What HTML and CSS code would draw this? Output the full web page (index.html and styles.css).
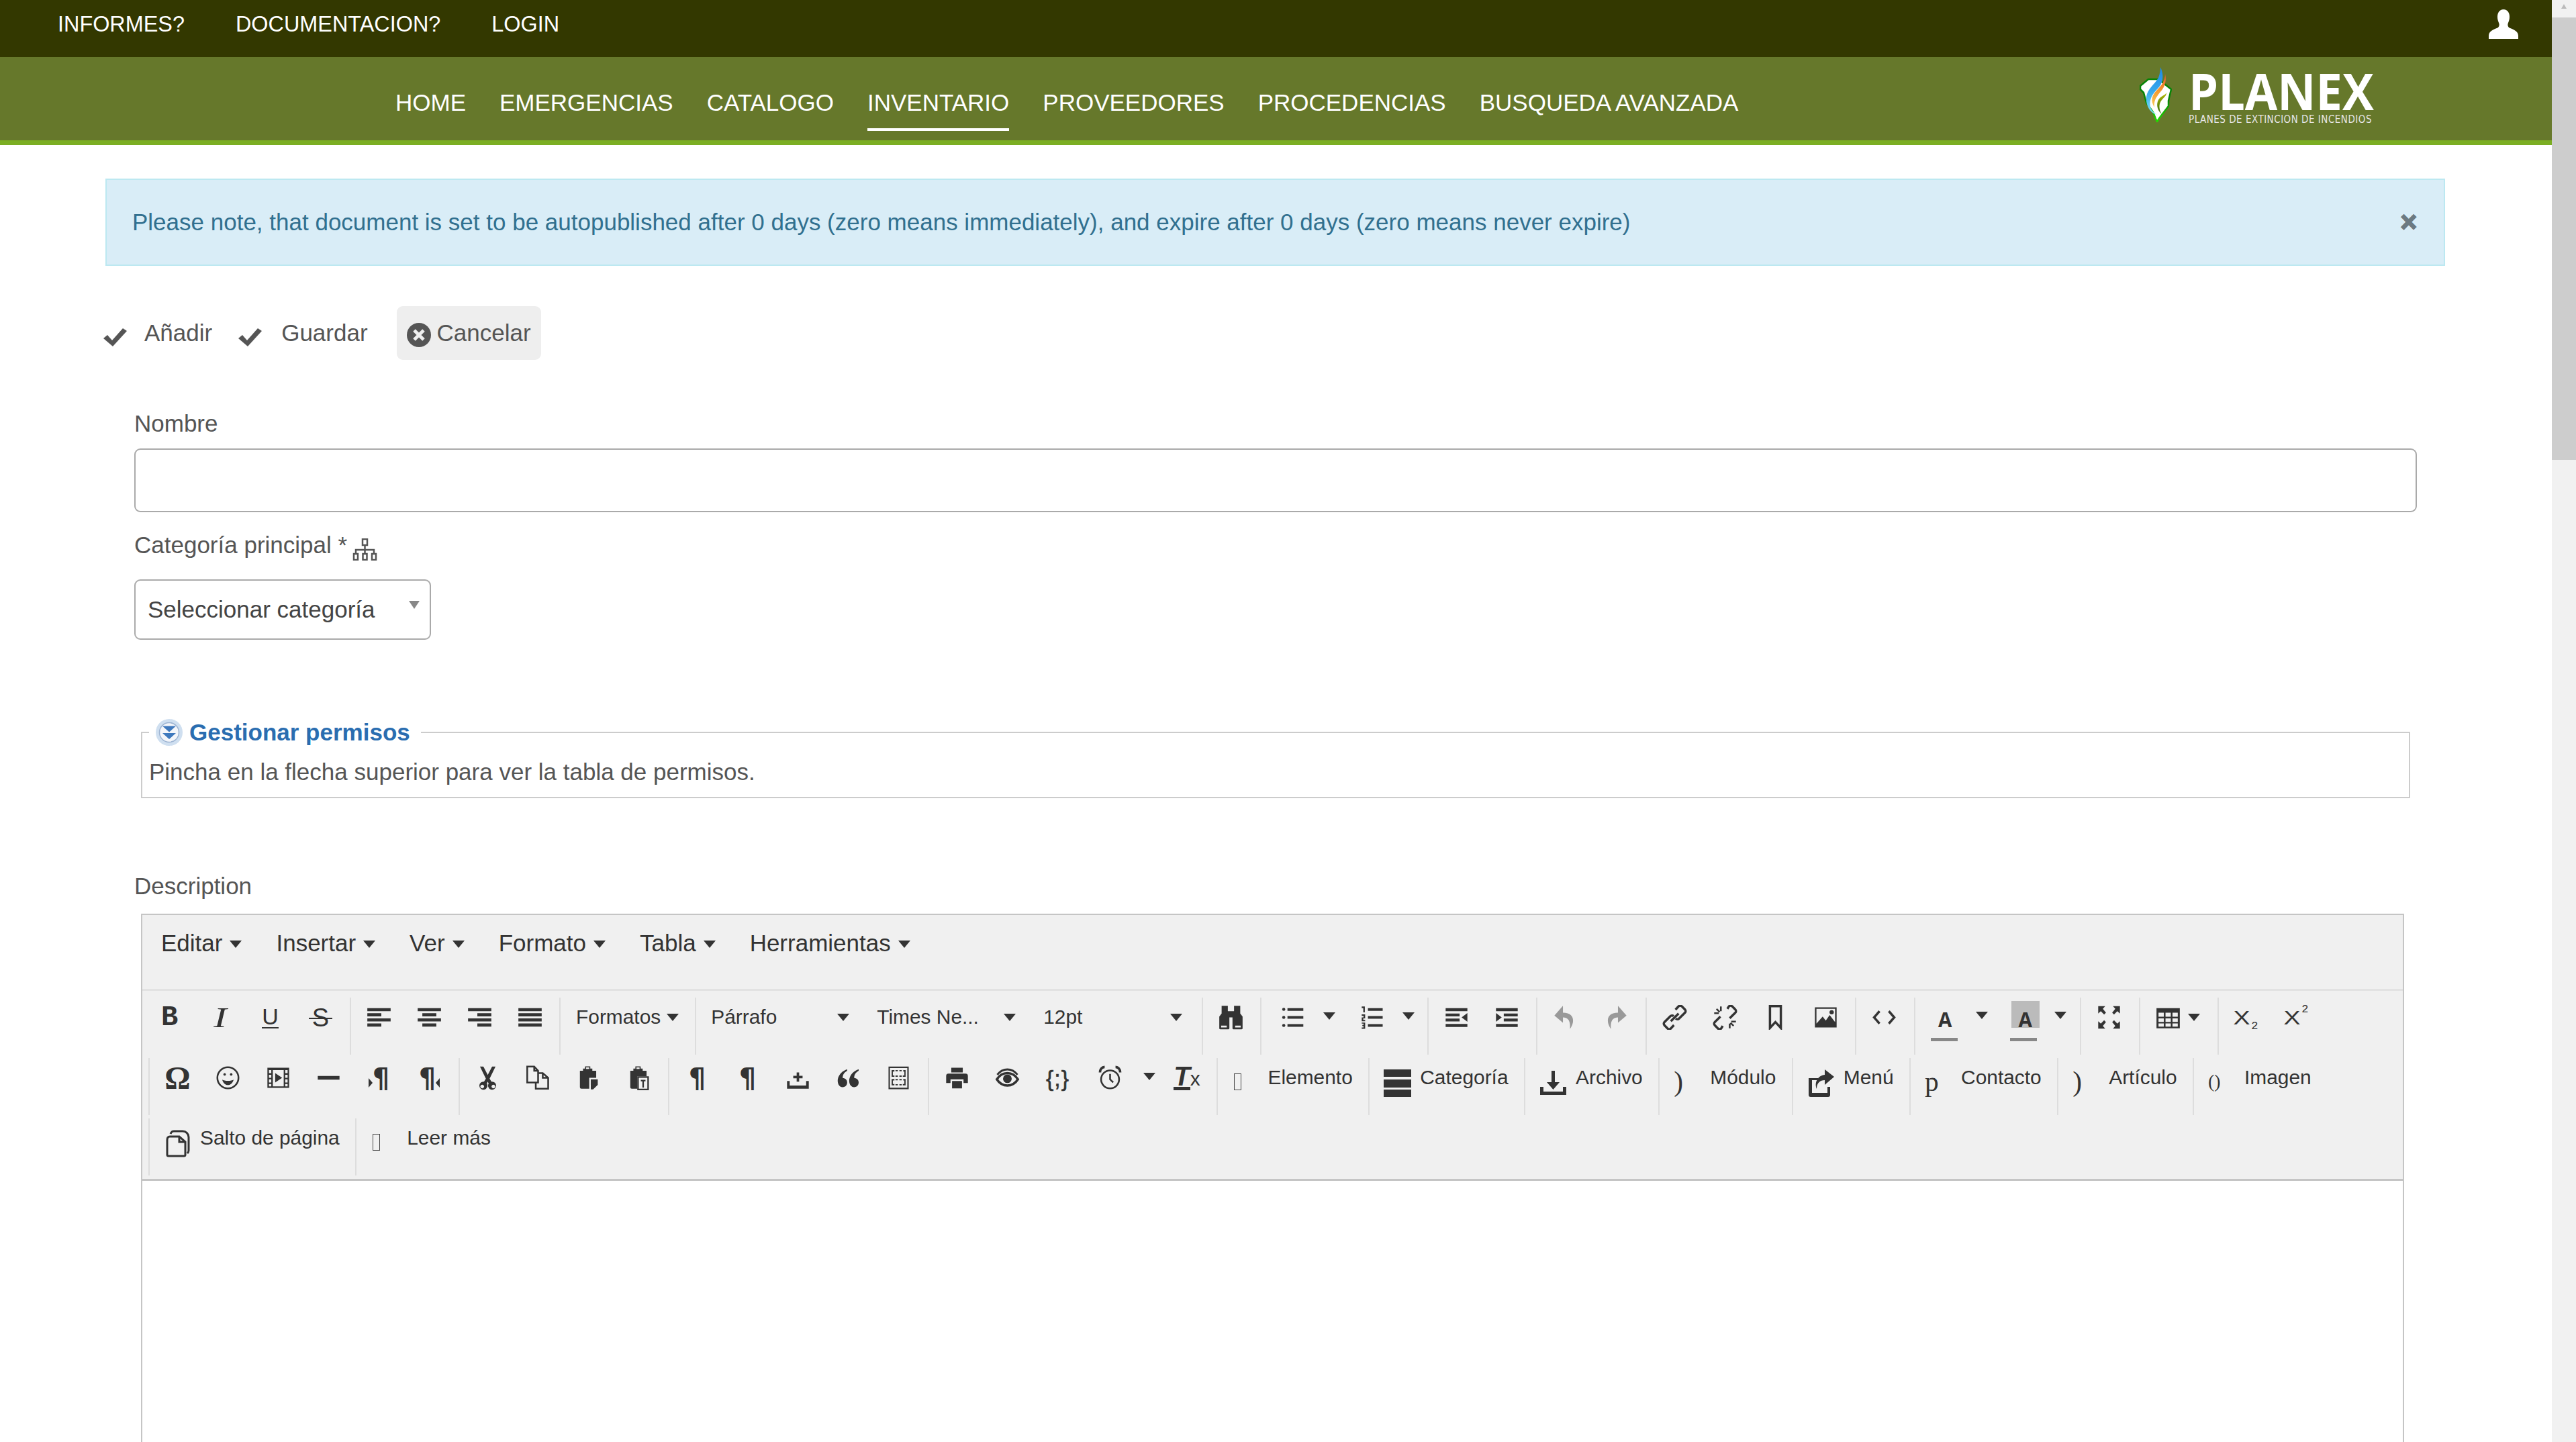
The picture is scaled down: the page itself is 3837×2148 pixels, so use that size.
FILE: index.html
```html
<!DOCTYPE html>
<html lang="es">
<head>
    <meta charset="UTF-8">
    <title>Planex - Inventario</title>
    <link rel="stylesheet" href="styles.css">
</head>
<body>
<div class="window">
<div class="page">

    <!-- Barra superior -->
    <div class="topbar">
        <a>INFORMES?</a>
        <a>DOCUMENTACION?</a>
        <a>LOGIN</a>
        <svg class="user-icon" viewBox="0 0 44 44"><path d="M22 0c6 0 9 5 9 11 0 4-1 6-2 9-1 2-1 5 1 7 3 2 14 4 14 12v5H0v-5c0-8 11-10 14-12 2-2 2-5 1-7-1-3-2-5-2-9 0-6 3-11 9-11z"/></svg>
    </div>

    <!-- Menu principal -->
    <div class="navbar">
        <nav class="nav-links">
            <a>HOME</a>
            <a>EMERGENCIAS</a>
            <a>CATALOGO</a>
            <a class="active">INVENTARIO</a>
            <a>PROVEEDORES</a>
            <a>PROCEDENCIAS</a>
            <a>BUSQUEDA AVANZADA</a>
        </nav>
        <div class="logo">
            <svg class="flame" viewBox="0 0 48 83">
                <defs>
                    <linearGradient id="fl-line" x1="0" y1="0" x2="0" y2="1"><stop offset="0.5" stop-color="#078407"/><stop offset="1" stop-color="#22dd00"/></linearGradient>
                    <linearGradient id="fl-blue" x1="0" y1="0" x2="0" y2="1"><stop offset="0" stop-color="#1e88e5"/><stop offset="0.5" stop-color="#35a8ec"/><stop offset="1" stop-color="#7fe3f7"/></linearGradient>
                    <linearGradient id="fl-orange" x1="0" y1="0" x2="0" y2="1"><stop offset="0" stop-color="#e8552a"/><stop offset="0.5" stop-color="#f59a2e"/><stop offset="1" stop-color="#f7cf5a"/></linearGradient>
                    <linearGradient id="fl-olive" x1="0" y1="0" x2="0" y2="1"><stop offset="0" stop-color="#b4b800"/><stop offset="1" stop-color="#2f6a10"/></linearGradient>
                </defs>
                <path d="M1 28 13 18 28 18 47 33 43 50 43 58 30 75 26 81 24 77 20 67 10 53 6 38 1 33Z" fill="#fff" stroke="url(#fl-line)" stroke-width="2.500" stroke-linejoin="round"/>
                <path d="M31 0C37 12 35 25 26 33 17 42 13 52 17 62 20 67 24 70 26 71 14 68 9 55 10 44 12 32 22 26 28 16 30 10 31 5 31 0Z" fill="url(#fl-blue)"/>
                <path d="M38 10C41 22 36 32 30 38 24 46 21 50 22 60 16 50 18 42 26 34 33 27 38 20 38 10Z" fill="url(#fl-orange)"/>
                <path d="M40 38C40 44 34 46 31 52 28 58 30 66 33 70 25 64 24 52 30 46 34 42 38 42 40 38Z" fill="url(#fl-olive)"/>
            </svg>
            <div>
                <div class="logo-name">PLANEX</div>
                <div class="logo-sub">PLANES DE EXTINCION DE INCENDIOS</div>
            </div>
        </div>
    </div>

    <div class="content">
        <div class="alert">
            <span>Please note, that document is set to be autopublished after 0 days (zero means immediately), and expire after 0 days (zero means never expire)</span>
            <span class="alert-close">×</span>
        </div>

        <div class="actions">
            <svg class="check" viewBox="0 0 35 27"><path d="M0 15 6 10 13 18 29 0 35 4 14 27Z"/></svg>
            <span class="act-text first">Añadir</span>
            <svg class="check next" viewBox="0 0 35 27"><path d="M0 15 6 10 13 18 29 0 35 4 14 27Z"/></svg>
            <span class="act-text first">Guardar</span>
            <span class="cancel">
                <svg viewBox="0 0 36 36"><circle cx="18" cy="18" r="18" fill="#555"/><path d="M11 11 25 25M25 11 11 25" stroke="#eee" stroke-width="5"/></svg>
                <span class="act-text">Cancelar</span>
            </span>
        </div>

        <form class="form">
            <label class="field-label">Nombre</label>
            <div class="text-input"></div>

            <label class="field-label cat-label">Categoría principal *
                <svg class="sitemap" viewBox="0 0 37 33"><rect x="15" y="1" width="7" height="9"/><path d="M18.500 10v13M5 23v-6h27v6"/><rect x="2" y="23" width="6" height="9"/><rect x="15.500" y="23" width="6" height="9"/><rect x="29" y="23" width="6" height="9"/></svg>
            </label>
            <div class="select-box">
                <span>Seleccionar categoría</span>
                <i class="select-arrow"></i>
            </div>

            <fieldset class="perms">
                <legend>
                    <svg viewBox="0 0 40 40"><circle cx="20" cy="20" r="20" fill="#cfdff0"/><circle cx="20" cy="20" r="14.500" fill="#f4f6fa" stroke="#9db4d2" stroke-width="1.500"/><path d="M10 10.500h20l-10 9zM10 21h20l-10 9z" fill="#3f79bd"/></svg>
                    <span>Gestionar permisos</span>
                </legend>
                <p>Pincha en la flecha superior para ver la tabla de permisos.</p>
            </fieldset>

            <label class="field-label desc-label">Description</label>

            <!-- Editor -->
            <div class="editor">
                <div class="menubar">
                    <span>Editar<i class="caret"></i></span>
                    <span>Insertar<i class="caret"></i></span>
                    <span>Ver<i class="caret"></i></span>
                    <span>Formato<i class="caret"></i></span>
                    <span>Tabla<i class="caret"></i></span>
                    <span>Herramientas<i class="caret"></i></span>
                </div>

                <div class="toolbar">
                    <div class="tb-row first-row">
                        <div class="tb-group">
                            <span class="btn"><span class="g-bold">B</span></span>
                            <span class="btn"><span class="g-italic">I</span></span>
                            <span class="btn"><span class="g-under">U</span></span>
                            <span class="btn"><span class="g-strike">S</span></span>
                        </div>
                        <div class="tb-group">
                            <span class="btn"><svg viewBox="0 0 16 16"><path d="M.5 2h15v2H.5zM.5 5.300h9v2h-9zM.5 8.600h15v2H.5zM.5 11.900h9v2h-9z"/></svg></span>
                            <span class="btn"><svg viewBox="0 0 16 16"><path d="M.5 2h15v2H.5zM3.500 5.300h9v2h-9zM.5 8.600h15v2H.5zM3.500 11.900h9v2h-9z"/></svg></span>
                            <span class="btn"><svg viewBox="0 0 16 16"><path d="M.5 2h15v2H.5zM6.500 5.300h9v2h-9zM.5 8.600h15v2H.5zM6.500 11.900h9v2h-9z"/></svg></span>
                            <span class="btn"><svg viewBox="0 0 16 16"><path d="M.5 2h15v2H.5zM.5 5.300h15v2H.5zM.5 8.600h15v2H.5zM.5 11.900h15v2H.5z"/></svg></span>
                        </div>
                        <div class="tb-group">
                            <span class="formats">Formatos<i class="caret"></i></span>
                        </div>
                        <div class="tb-group">
                            <span class="listbox">Párrafo<i class="caret"></i></span>
                            <span class="listbox">Times Ne...<i class="caret"></i></span>
                            <span class="listbox">12pt<i class="caret"></i></span>
                        </div>
                        <div class="tb-group">
                            <span class="btn"><svg viewBox="0 0 16 16"><path d="M2 .5h4V4h4V.5h4v5l1.500 2V15a.7.7 0 0 1-.7.7H9.700A.7.7 0 0 1 9 15V8H7v7a.7.7 0 0 1-.7.7H1.200A.7.7 0 0 1 .5 15V7.500l1.500-2z"/><path d="M1.700 13.300h3.600v1.200H1.700zM10.700 13.300h3.600v1.200h-3.600z" fill="#f0f0f0"/></svg></span>
                        </div>
                        <div class="tb-group">
                            <span class="split list-split">
                                <svg viewBox="0 0 16 16"><circle cx="1.800" cy="2.800" r="1"/><circle cx="1.800" cy="8" r="1"/><circle cx="1.800" cy="13.200" r="1"/><path d="M4.200 2h10.200v1.800H4.200zM4.200 7.100h10.200v1.800H4.200zM4.200 12.300h10.200v1.800H4.200z"/></svg>
                                <i class="caret"></i>
                            </span>
                            <span class="split list-split">
                                <svg viewBox="0 0 16 16"><path d="M1 1h2v3.800H2V2H1zM1 6h2.200v2.600H2v1h1.200v.9H1V8h1.200V7H1zM1 11.300h2.200v4H1v-.8h1.200v-.9H1.400v-.7h.8V12H1zM5 2h9.500v1.800H5zM5 7.100h9.500v1.800H5zM5 12.300h9.500v1.800H5z"/></svg>
                                <i class="caret"></i>
                            </span>
                        </div>
                        <div class="tb-group">
                            <span class="btn"><svg viewBox="0 0 16 16"><path d="M1 2h14v2H1zM1 5.500h9v1.800H1zM1 8.800h9v1.800H1zM1 12.200h14v2H1zM15 5.200v5.600L11.300 8z"/></svg></span>
                            <span class="btn"><svg viewBox="0 0 16 16"><path d="M1 2h14v2H1zM6 5.500h9v1.800H6zM6 8.800h9v1.800H6zM1 12.200h14v2H1zM1 5.200v5.600L4.700 8z"/></svg></span>
                        </div>
                        <div class="tb-group pad7">
                            <span class="btn"><svg class="dim" viewBox="0 0 16 16"><path d="M6.500.5 1 6.800l5.500 4.700V8C10 8 11.500 10.500 11 15.500c3-4 3.500-10.500-4.500-10.500z"/></svg></span>
                            <span class="btn"><svg class="dim" viewBox="0 0 16 16"><path d="m9.500.5 5.500 6.300-5.500 4.700V8C6 8 4.500 10.500 5 15.500 2 11.500 1.500 5 9.500 5z"/></svg></span>
                        </div>
                        <div class="tb-group">
                            <span class="btn"><svg class="line" viewBox="0 0 16 16"><path d="m8.500 3 2-2.100a1.500 1.500 0 0 1 2.100 0l2 2a1.500 1.500 0 0 1 0 2.100l-3.800 3.800a1.500 1.500 0 0 1-2.100 0M7.500 13l-2 2.100a1.500 1.500 0 0 1-2.100 0l-2-2a1.500 1.500 0 0 1 0-2.100l3.800-3.800a1.500 1.500 0 0 1 2.100 0"/><path d="M5.500 10.500l5-5"/></svg></span>
                            <span class="btn"><svg class="line" viewBox="0 0 16 16"><path d="m9.500 2.500 1-1.600a1.500 1.500 0 0 1 2.100 0l2 2a1.500 1.500 0 0 1 0 2.100L11 8.500M6.500 13.500l-1 1.600a1.500 1.500 0 0 1-2.100 0l-2-2a1.500 1.500 0 0 1 0-2.100L5 7.500"/><path stroke-width="1.100" d="M1 5.300h3M5.300 1v3M11 15v-3M15 10.700h-3M2.500 2.500l2 2M11.500 11.500l2 2"/></svg></span>
                            <span class="btn"><svg class="line" viewBox="0 0 16 16"><path d="M4.500.8h7v14L8 11l-3.500 3.800z"/></svg></span>
                            <span class="btn"><svg viewBox="0 0 16 16"><path d="M1 1.500h14v13H1z"/><path d="M2 2.500h12V11l-3.500-4.500L8 10 6 7.500 2 12z" fill="#f0f0f0"/><circle cx="11.800" cy="4.700" r="1.400"/></svg></span>
                        </div>
                        <div class="tb-group pad7">
                            <span class="btn"><svg class="line" viewBox="0 0 16 16"><path d="M5 4 1.500 8 5 12M11 4l3.500 4-3.500 4"/></svg></span>
                        </div>
                        <div class="tb-group">
                            <span class="split color">
                                <span class="color-a"><span class="g-a">A</span></span>
                                <i class="caret"></i>
                            </span>
                            <span class="split color">
                                <span class="color-a hl"><span class="g-a">A</span></span>
                                <i class="caret"></i>
                            </span>
                        </div>
                        <div class="tb-group pad7">
                            <span class="btn"><svg viewBox="0 0 16 16"><path d="M1 .8h4.500L4 2.500 6 5 4.800 6.200 2.700 4 1 5.500zM15 .8h-4.500L12 2.500 10 5l1.200 1.200L13.300 4 15 5.500zM1 15.200h4.500L4 13.500 6 11l-1.200-1.200L2.700 12 1 10.500zM15 15.200h-4.500l1.500-1.700L10 11l1.200-1.200 2.100 2.200 1.700-1.500z"/></svg></span>
                        </div>
                        <div class="tb-group">
                            <span class="split table-split">
                                <svg viewBox="0 0 16 16"><path fill-rule="evenodd" d="M.5 2h15v13H.5zM1.800 5v2.600h3.400V5zm4.500 0v2.600h3.400V5zm4.500 0v2.600h3.400V5zM1.800 8.600v2.300h3.400V8.600zm4.500 0v2.300h3.400V8.600zm4.500 0v2.300h3.400V8.600zM1.800 11.900v2h3.400v-2zm4.500 0v2h3.400v-2zm4.500 0v2h3.400v-2z"/></svg>
                                <i class="caret"></i>
                            </span>
                        </div>
                        <div class="tb-group">
                            <span class="btn"><span class="g-x"><span>X</span><sub>2</sub></span></span>
                            <span class="btn"><span class="g-x"><span>X</span><sup>2</sup></span></span>
                        </div>
                    </div>

                    <div class="tb-row">
                        <div class="tb-group">
                            <span class="btn"><span class="g-omega">Ω</span></span>
                            <span class="btn"><svg viewBox="0 0 16 16" class="line thin"><circle cx="8" cy="8" r="6.800"/><path class="solid" d="M4.300 9.200c1.500 1 5.900 1 7.400 0-.7 2.500-2.300 3.500-3.700 3.500s-3-1-3.700-3.500z"/><circle class="solid" cx="5.900" cy="5.800" r=".8"/><circle class="solid" cx="10.100" cy="5.800" r=".8"/></svg></span>
                            <span class="btn"><svg viewBox="0 0 16 16"><path fill-rule="evenodd" d="M1 1.500h14v13H1zM2 3v2h1.500V3zm10.500 0v2H14V3zM2 6v2h1.500V6zm10.500 0v2H14V6zM2 9v2h1.500V9zm10.500 0v2H14V9zM2 12v1.500h1.500V12zm10.500 0v1.500H14V12zM4.500 3v10.500h7V3z"/><path d="M6 5l4.500 3L6 11z"/></svg></span>
                            <span class="btn"><svg viewBox="0 0 16 16"><path d="M1 6.800h14v2.400H1z"/></svg></span>
                            <span class="btn"><span class="g-para"><i class="tri-r"></i>¶</span></span>
                            <span class="btn"><span class="g-para">¶<i class="tri-l"></i></span></span>
                        </div>
                        <div class="tb-group">
                            <span class="btn"><svg viewBox="0 0 16 16"><path d="M3 .8h2.200L8 6.200 10.800.8H13L9.200 8.500l1.200 2a2.600 2.600 0 1 1-1.800 1.200L8 10.500l-.6 1.200a2.600 2.600 0 1 1-1.800-1.200l1.200-2zM4.400 12.400a1.200 1.200 0 1 0 .1 0zm7.200 0a1.200 1.200 0 1 0 .1 0z" fill-rule="evenodd"/></svg></span>
                            <span class="btn"><svg class="line thin" viewBox="0 0 16 16"><path d="M1 .8h4.500L8 3.500V11H1zM5.500 1v2.500H8M8 5h3l3.500 3v7H6.500v-4M11 5v3h3.500"/></svg></span>
                            <span class="btn"><svg viewBox="0 0 16 16"><path d="M4.500 2h1.300V.6h3.400V2h1.300v1.500H13V8H8.500v7H3.500a1 1 0 0 1-1-1V3.500h2z"/><path fill="#333" d="M9.500 9H14v3.500L11 15.500H9.500z"/><path d="M6.500 1.300h2v1h-2z" fill="#f0f0f0"/></svg></span>
                            <span class="btn"><svg viewBox="0 0 16 16"><path d="M4.500 2h1.300V.6h3.400V2h1.300v1.500H13V7H7v8H3.500a1 1 0 0 1-1-1V3.500h2z"/><path d="M6.500 1.300h2v1h-2z" fill="#f0f0f0"/><path d="M7.500 7.500h6.500v8H7.500z" fill="#f0f0f0" stroke="#333" stroke-width="1"/><path d="M9.300 9.300h3v1h-1v4h-1v-4h-1z"/></svg></span>
                        </div>
                        <div class="tb-group">
                            <span class="btn"><span class="g-para">¶</span></span>
                            <span class="btn"><span class="g-para">¶</span></span>
                            <span class="btn"><svg viewBox="0 0 16 16"><path d="M7.200 4.500h1.600v2.200H11v1.600H8.800v2.200H7.200V8.300H5V6.700h2.200zM1 10h1.700v3h10.600v-3H15v5H1z"/></svg></span>
                            <span class="btn"><svg viewBox="0 0 16 16"><path d="M7.300 2.500C4.500 3.500 2 5.500 1.300 8.800c-.5 3 1 5.200 3 5.200 2 0 3-1.500 3-3 0-1.700-1.200-2.800-2.800-2.800-.3-1.700.8-3.600 2.800-4.700zM14.700 2.500c-2.800 1-5.300 3-6 6.300-.5 3 1 5.200 3 5.200 2 0 3-1.500 3-3 0-1.700-1.200-2.800-2.800-2.800-.3-1.700.8-3.600 2.800-4.700z"/></svg></span>
                            <span class="btn"><svg viewBox="0 0 16 16"><path fill-rule="evenodd" d="M1.500.8h13v14.500h-13zM2.400 1.700v12.700h11.200V1.700z"/><path d="M3.500 3h1.800v1H4.300v2.500h1v.8H3.500zM6 3h1.500v.8H6zM8.500 3H10v.8H8.500zM11 3h1.500v4.300h-1.800v-.8h1V4h-.7zM6 6.500h1.500v.8H6zM8.500 6.500H10v.8H8.500zM3.500 8.800h1.800v.9H4.300V12h1v.9H3.500zM6 8.800h1.500v.8H6zM8.500 8.800H10v.8H8.500zM11 8.800h1.500v4.100h-1.800V12h1V9.700H11zM6 12.100h1.500v.8H6zM8.500 12.100H10v.8H8.500z"/></svg></span>
                        </div>
                        <div class="tb-group">
                            <span class="btn"><svg viewBox="0 0 16 16"><path d="M4.300 1.500h7.400v3H4.300zM2.500 5.300h11a1.500 1.500 0 0 1 1.500 1.500v4.500h-2.800V9H3.800v2.300H1V6.800a1.500 1.500 0 0 1 1.500-1.500zM4.800 10h6.400v4.800H4.800z"/></svg></span>
                            <span class="btn"><svg class="line" viewBox="0 0 16 16"><path d="M1.200 9C3 6.200 5.500 5 8 5s5 1.200 6.800 4C13 11.800 10.500 13 8 13s-5-1.200-6.800-4z"/><path d="M1.500 6C3.500 3.500 5.700 2.600 8 2.600s4.500.9 6.500 3.400" stroke-width="1.300"/><circle class="solid" cx="8" cy="8.600" r="2.800"/></svg></span>
                            <span class="btn"><span class="g-code">{;}</span></span>
                            <span class="split clock-split">
                                <svg class="line thin" viewBox="0 0 16 16"><circle cx="8" cy="9" r="5.800"/><path d="M8 5.500V9l2 2"/><path d="M1.500 4.500c0-2 1.300-3.500 3-3.500M14.500 4.500c0-2-1.300-3.500-3-3.500" stroke-width="1.600"/></svg>
                                <i class="caret"></i>
                            </span>
                            <span class="btn"><span class="g-tx"><span>T</span><small>x</small></span></span>
                        </div>
                        <div class="tb-group">
                            <span class="txt-btn"><span class="slot"><i class="tofu"></i></span>Elemento</span>
                        </div>
                        <div class="tb-group">
                            <span class="txt-btn"><span class="slot"><svg viewBox="0 0 41 41"><path d="M0 0h41v11H0zM0 15h41v12H0zM0 30h41v11H0z"/></svg></span>Categoría</span>
                        </div>
                        <div class="tb-group">
                            <span class="txt-btn"><span class="slot"><svg viewBox="0 0 41 41"><path d="M18 2h5v17h7L20.500 30 11 19h7zM1 26h5v7h29v-7h5v12H1z"/></svg></span>Archivo</span>
                        </div>
                        <div class="tb-group">
                            <span class="txt-btn"><span class="slot serif">)</span>Módulo</span>
                        </div>
                        <div class="tb-group">
                            <span class="txt-btn"><span class="slot"><svg viewBox="0 0 41 41"><path d="M2 13h14v3H7v19h23v-9h4v12a3 3 0 0 1-3 3H5a3 3 0 0 1-3-3z"/><path d="M26 0l14 11-14 12v-7c-7 0-12 4-12 13-4-10 2-20 12-21z"/></svg></span>Menú</span>
                        </div>
                        <div class="tb-group">
                            <span class="txt-btn"><span class="slot serif">p</span>Contacto</span>
                        </div>
                        <div class="tb-group">
                            <span class="txt-btn"><span class="slot serif">)</span>Artículo</span>
                        </div>
                        <div class="tb-group">
                            <span class="txt-btn"><span class="slot serif small">()</span>Imagen</span>
                        </div>
                    </div>

                    <div class="tb-row">
                        <div class="tb-group">
                            <span class="txt-btn"><span class="slot"><svg class="pages" viewBox="0 0 41 41"><path d="M5 15c0-3 1-5 4-5h14l9 8v19a2 2 0 0 1-2 2H7a2 2 0 0 1-2-2zM23 10v8h9"/><path d="M10 6c1-3 3-4 5-4h13c5 0 9 4 9 9v20c0 2-1 3-2 4"/></svg></span>Salto de página</span>
                        </div>
                        <div class="tb-group">
                            <span class="txt-btn"><span class="slot"><i class="tofu"></i></span>Leer más</span>
                        </div>
                    </div>
                </div>

                <div class="edit-area"></div>
            </div>
        </form>
    </div>
</div>

<!-- Barra de scroll -->
<div class="scrollbar">
    <div class="scroll-up"><i></i></div>
    <div class="scroll-thumb"></div>
</div>
</div>
</body>
</html>
```

FILE: styles.css
```css
* {
    box-sizing: border-box;
}
html, body {
    margin: 0;
    height: 100%;
    overflow: hidden;
}
body {
    font-family: "Liberation Sans", Arial, sans-serif;
    font-size: 35px;
    line-height: 46px;
    color: #555;
    background-color: #fff;
}
.window {
    display: flex;
    height: 2148px;
    overflow: hidden;
}
.page {
    flex: 1;
    min-width: 0;
}

/* Barra superior */
.topbar {
    display: flex;
    align-items: flex-start;
    gap: 76px;
    height: 85px;
    padding: 13px 50px 0 86px;
    background-color: #333800;
    color: #fff;
    font-size: 32.4px;
}
.user-icon {
    width: 44px;
    height: 44px;
    margin: 1px 0 0 auto;
    fill: #fff;
}

/* Menu principal */
.navbar {
    display: flex;
    height: 131px;
    padding: 0 271px 0 589px;
    background-color: #66782b;
    border-bottom: 7px solid #7bae23;
    color: #fff;
}
.nav-links {
    display: flex;
    gap: 50px;
    padding-top: 45px;
}
.nav-links a {
    height: 65px;
    white-space: nowrap;
}
.nav-links a.active {
    border-bottom: 4px solid #fff;
}
.logo {
    display: flex;
    gap: 25px;
    width: 343px;
    margin-left: auto;
    padding-top: 15px;
}
.flame {
    flex: none;
    width: 48px;
    height: 83px;
}
.logo-name {
    margin: 5px 0 3px;
    font-family: "Open Sans", sans-serif;
    font-size: 75.6px;
    font-weight: bold;
    line-height: 60px;
    transform: scaleX(0.93);
    transform-origin: left;
}
.logo-sub {
    font-family: "DejaVu Sans", sans-serif;
    font-size: 15px;
    font-stretch: condensed;
    line-height: 20px;
    letter-spacing: 0.5px;
    color: #e6e6e6;
    white-space: nowrap;
}

/* Aviso */
.alert {
    display: flex;
    align-items: center;
    justify-content: space-between;
    height: 130px;
    margin: 50px 159px 0 157px;
    padding: 0 40px 0 38px;
    background-color: #d9edf7;
    border: 2px solid #bce8f1;
    color: #31708f;
}
.alert-close {
    font-size: 42px;
    font-weight: bold;
    color: #6c7a82;
    -webkit-text-stroke: 2px #6c7a82;
    text-shadow: 0 2px 0 #fff;
}

/* Botones de accion */
.actions {
    display: flex;
    align-items: flex-start;
    height: 80px;
    margin: 60px 0 0 154px;
    line-height: 80px;
}
.check {
    width: 35px;
    height: 27px;
    margin: 33px 26px 0 0;
    fill: #555;
}
.check.next {
    margin-right: 29px;
}
.act-text.first {
    margin-right: 39px;
}
.cancel {
    display: flex;
    width: 215px;
    height: 80px;
    margin-left: 4px;
    padding-left: 15px;
    background-color: #eee;
    border-radius: 9px;
}
.cancel svg {
    width: 36px;
    height: 36px;
    margin: 25px 9px 0 0;
}

/* Formulario */
.form {
    padding: 0 201px 0 200px;
}
.field-label {
    display: block;
    margin-top: 72px;
    height: 46px;
}
.cat-label {
    margin-top: 26px;
}
.desc-label {
    margin-top: 108px;
}
.sitemap {
    width: 37px;
    height: 33px;
    margin-left: -2px;
    vertical-align: -11px;
    fill: none;
    stroke: #555;
    stroke-width: 2.5;
}
.text-input {
    height: 95px;
    margin-top: 14px;
    background-color: #fff;
    border: 2px solid #aaa;
    border-radius: 9px;
}
.select-box {
    position: relative;
    width: 442px;
    height: 90px;
    margin-top: 28px;
    padding: 20px 0 0 18px;
    border: 2px solid #aaa;
    border-radius: 9px;
    color: #444;
}
.select-arrow {
    position: absolute;
    top: 30px;
    right: 15px;
    border-top: 12px solid #888;
    border-left: 8px solid transparent;
    border-right: 8px solid transparent;
}
.perms {
    min-width: 0;
    margin: 118px 10px 0;
    padding: 16px 0 14px 10px;
    border: 2px solid #ccc;
}
.perms legend {
    display: flex;
    align-items: center;
    gap: 10px;
    height: 40px;
    padding: 0 16px 0 10px;
    color: #2a6db0;
    font-weight: bold;
}
.perms legend svg {
    width: 40px;
    height: 40px;
}
.perms p {
    margin: 0;
}

/* Editor */
.editor {
    margin: 18px 19px 0 10px;
    border: 2px solid #c5c5c5;
    border-bottom: 0;
    color: #333;
}
.menubar {
    display: flex;
    gap: 51px;
    height: 113px;
    padding: 19px 0 0 28px;
    background-color: #f0f0f0;
    border-bottom: 3px solid #e2e2e2;
}
.caret {
    display: inline-block;
    border-top: 11px solid #333;
    border-left: 9.5px solid transparent;
    border-right: 9.5px solid transparent;
}
.menubar .caret {
    margin-left: 11px;
    vertical-align: 5px;
}
.toolbar {
    padding: 10px 0 0;
    height: 283px;
    background-color: #f0f0f0;
    border-bottom: 3px solid #c5c5c5;
}
.tb-row {
    display: flex;
    padding-left: 9px;
    margin-bottom: 5px;
}
.tb-row.first-row {
    padding-left: 0;
}
.tb-group {
    display: flex;
    align-items: flex-start;
    height: 85px;
    padding: 0 6px 0 4px;
    border-left: 2px solid #ddd;
    font-size: 29.9px;
    line-height: 58px;
    white-space: nowrap;
}
.tb-group.pad7 {
    padding-right: 7px;
}
.first-row .tb-group:first-child {
    padding-left: 3px;
    border-left: 0;
}
.btn {
    display: flex;
    align-items: center;
    justify-content: center;
    width: 75px;
    height: 59px;
}
svg {
    fill: #333;
}
.btn svg, .split svg {
    flex: none;
    width: 37px;
    height: 37px;
}
.btn svg.dim {
    fill: #999;
}
svg.line {
    fill: none;
    stroke: #333;
    stroke-width: 1.5;
}
svg.line.thin {
    stroke-width: 1.1;
}
svg.line .solid {
    fill: #333;
    stroke: none;
}
svg.pages {
    fill: none;
    stroke: #333;
    stroke-width: 3;
}

/* Iconos de texto */
.g-bold {
    font-family: "Liberation Mono", monospace;
    font-size: 42px;
    font-weight: bold;
    line-height: 60px;
}
.g-italic {
    font-family: "Liberation Serif", serif;
    font-size: 42px;
    font-style: italic;
    line-height: 60px;
    transform: scaleX(1.4);
}
.g-under {
    font-size: 34px;
    line-height: 32px;
    border-bottom: 2px solid #333;
    margin-top: -2px;
}
.g-strike {
    position: relative;
    font-size: 38px;
    line-height: 60px;
}
.g-strike::after {
    content: "";
    position: absolute;
    left: -5px;
    right: -5px;
    top: 30px;
    height: 2px;
    background-color: #333;
}
.g-omega {
    font-family: "Liberation Serif", serif;
    font-size: 48px;
    font-weight: bold;
    line-height: 60px;
}
.g-para {
    display: flex;
    align-items: flex-end;
    font-family: "DejaVu Sans", sans-serif;
    font-size: 40px;
    font-weight: bold;
    line-height: 40px;
}
.tri-r, .tri-l {
    margin-bottom: 6px;
    border-top: 7px solid transparent;
    border-bottom: 7px solid transparent;
}
.tri-r {
    border-left: 6px solid #333;
}
.tri-l {
    border-right: 6px solid #333;
}
.g-code {
    font-size: 34px;
    line-height: 60px;
    letter-spacing: 1px;
    -webkit-text-stroke: 0.6px #333;
}
.g-tx {
    display: flex;
    align-items: baseline;
    line-height: 60px;
}
.g-tx span {
    height: 37px;
    line-height: 32px;
    font-size: 40px;
    font-style: italic;
    font-weight: bold;
    border-bottom: 5px solid #333;
}
.g-tx small {
    font-size: 30px;
    line-height: 26px;
}
.g-x {
    font-size: 30px;
    line-height: 60px;
}
.g-x > span {
    display: inline-block;
    transform: scaleX(1.25);
    margin-right: 4px;
}
.g-x sub, .g-x sup {
    font-family: "Liberation Mono", monospace;
    font-size: 17px;
    line-height: 0;
}
.g-x sup {
    vertical-align: 18px;
}
.g-a {
    font-family: "Liberation Mono", monospace;
    font-size: 34px;
    font-weight: bold;
    line-height: 30px;
}

/* Listas desplegables */
.formats {
    padding: 0 18px 0 19px;
}
.formats .caret {
    margin-left: 9px;
    vertical-align: 4px;
}
.listbox {
    display: flex;
    justify-content: space-between;
    width: 248px;
    padding: 0 23px 0 18px;
}
.listbox .caret {
    margin-top: 24px;
}
.listbox:first-child {
    width: 247px;
}
.split {
    display: flex;
    align-items: flex-start;
    width: 117.5px;
    height: 60px;
    padding: 11px 0 0 24.5px;
}
.split .caret {
    margin: 11px 0 0 26px;
}
.list-split {
    width: 118.5px;
}
.clock-split {
    padding-left: 21.5px;
}
.clock-split .caret {
    margin-left: 31px;
}
.table-split {
    width: 104.5px;
    padding-left: 18.5px;
}
.table-split .caret {
    margin-left: 11px;
    margin-top: 13px;
}
.color {
    padding: 0 0 0 19px;
}
.color .caret {
    margin: 21px 0 0 24.5px;
}
.color-a {
    position: relative;
    width: 42px;
    height: 40px;
    margin-top: 5px;
    text-align: center;
}
.color-a::after {
    content: "";
    position: absolute;
    left: 0;
    top: 55px;
    width: 40px;
    height: 5px;
    background-color: #888;
}
.color-a.hl {
    background-color: #bbb;
    margin-left: 2px;
    margin-right: -2px;
}
.color-a.hl::after {
    left: -2px;
}

/* Botones con texto */
.txt-btn {
    display: flex;
    padding: 0 17.5px 0 17px;
}
.slot {
    flex: none;
    width: 41px;
    height: 41px;
    margin: 17px 13px 0 0;
    display: block;
}
.slot svg {
    display: block;
    width: 41px;
    height: 41px;
}
.slot.serif {
    font-family: "Liberation Serif", serif;
    font-size: 41.4px;
    font-weight: normal;
    line-height: 36px;
}
.slot.serif.small {
    font-size: 28px;
}
.tofu {
    display: block;
    width: 11px;
    height: 25px;
    margin: 6px 0 0 3px;
    border: 1px solid #444;
}
.edit-area {
    height: 600px;
    background-color: #fff;
}

/* Barra de scroll */
.scrollbar {
    flex: none;
    width: 36px;
    background-color: #f1f1f1;
}
.scroll-up {
    display: flex;
    justify-content: center;
    height: 26px;
    padding-top: 6px;
}
.scroll-up i {
    width: 0;
    height: 0;
    border-bottom: 7px solid #bbb;
    border-left: 4px solid transparent;
    border-right: 4px solid transparent;
}
.scroll-thumb {
    height: 659px;
    background-color: #cdcdcd;
}
```
